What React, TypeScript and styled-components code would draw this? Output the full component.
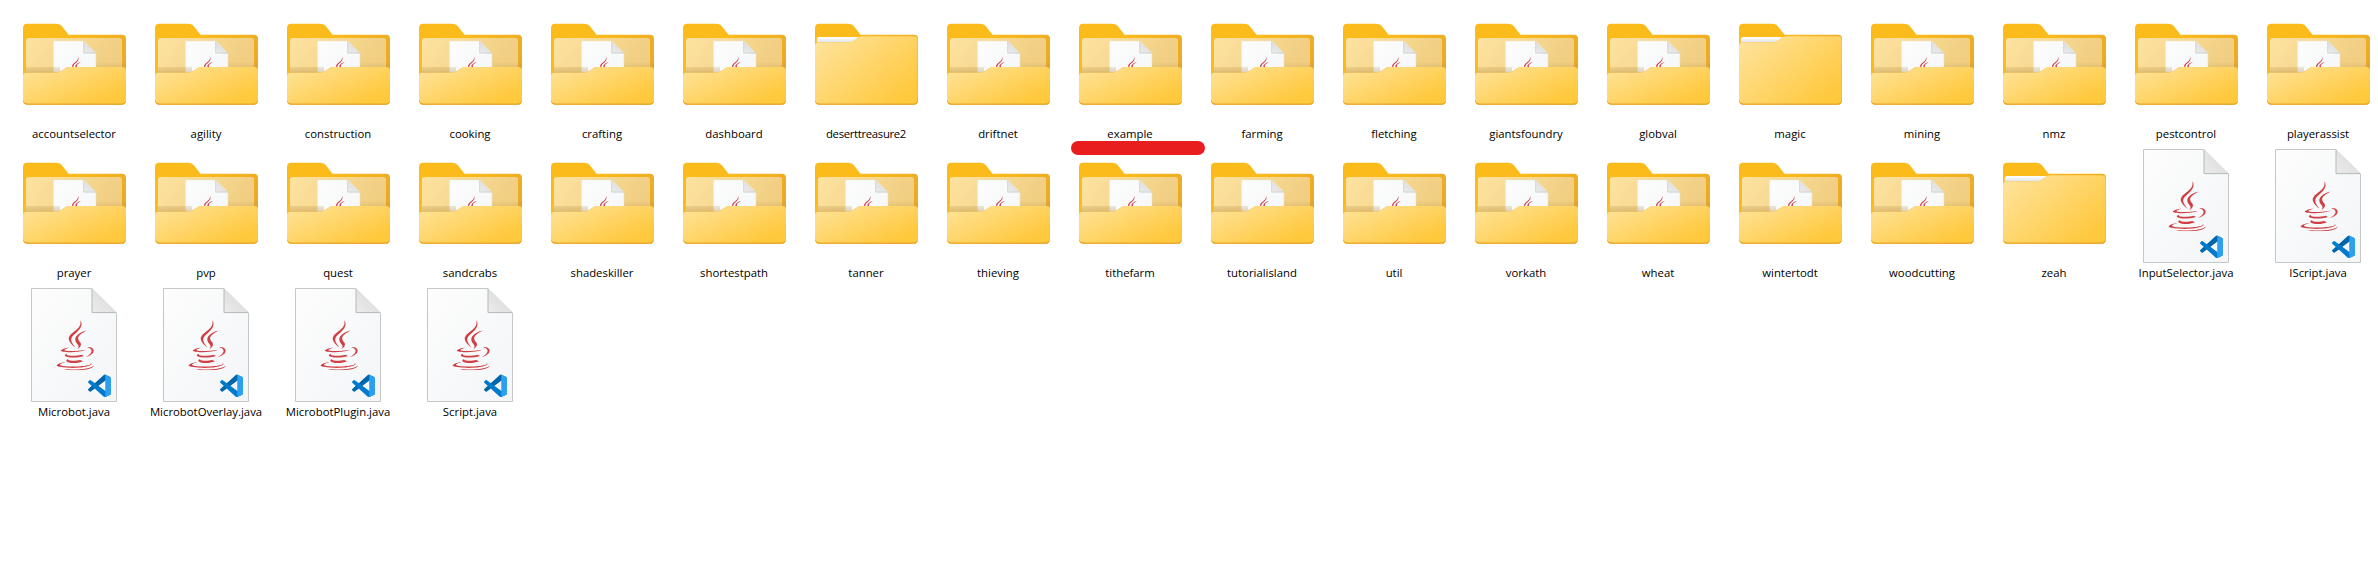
import React from "react";
import styled, { createGlobalStyle } from "styled-components";
import { FaJava } from "react-icons/fa";

type Kind = "folder" | "empty" | "java";

interface Entry {
  name: string;
  kind?: Kind;
  marked?: boolean;
  tracking?: number;
}

const entries: Entry[] = [
  { name: "accountselector" },
  { name: "agility" },
  { name: "construction" },
  { name: "cooking" },
  { name: "crafting" },
  { name: "dashboard" },
  { name: "deserttreasure2", kind: "empty", tracking: -0.33 },
  { name: "driftnet" },
  { name: "example", marked: true },
  { name: "farming" },
  { name: "fletching" },
  { name: "giantsfoundry" },
  { name: "globval" },
  { name: "magic", kind: "empty" },
  { name: "mining" },
  { name: "nmz" },
  { name: "pestcontrol" },
  { name: "playerassist" },
  { name: "prayer" },
  { name: "pvp" },
  { name: "quest" },
  { name: "sandcrabs" },
  { name: "shadeskiller" },
  { name: "shortestpath" },
  { name: "tanner" },
  { name: "thieving" },
  { name: "tithefarm" },
  { name: "tutorialisland" },
  { name: "util" },
  { name: "vorkath" },
  { name: "wheat" },
  { name: "wintertodt" },
  { name: "woodcutting" },
  { name: "zeah", kind: "empty" },
  { name: "InputSelector.java", kind: "java" },
  { name: "IScript.java", kind: "java" },
  { name: "Microbot.java", kind: "java" },
  { name: "MicrobotOverlay.java", kind: "java" },
  { name: "MicrobotPlugin.java", kind: "java" },
  { name: "Script.java", kind: "java" },
];

const GlobalStyle = createGlobalStyle`
  body {
    margin: 0;
    background: #fff;
    color: #000;
    font-family: "Open Sans", "Noto Sans", sans-serif;
  }
`;

const FileGrid = styled.main`
  display: grid;
  grid-template-columns: repeat(18, 120px);
  grid-auto-rows: 139px;
  column-gap: 12px;
  padding: 10px 0 0 14px;
`;

const Item = styled.div`
  position: relative;
  display: flex;
  flex-direction: column;
  align-items: center;
  gap: 2px;
`;

const Icon = styled.svg`
  flex: none;
  width: 114px;
  height: 114px;
`;

const Label = styled.span<{ $tracking: number }>`
  font-size: 11.35px;
  line-height: 16px;
  letter-spacing: ${(p) => p.$tracking}px;
  white-space: nowrap;
`;

const Marker = styled.div`
  position: absolute;
  top: 131px;
  left: 1px;
  width: 134px;
  height: 14px;
  border-radius: 7px;
  background: #e71d1e;
`;

const Gradients = styled.svg`
  position: absolute;
  width: 0;
  height: 0;
`;

const SharedGradients = () => (
  <Gradients aria-hidden="true">
    <defs>
      <linearGradient id="back" x1="0" y1="0" x2="1" y2="0.6">
        <stop offset="0.4" stopColor="#fbbb1b" />
        <stop offset="1" stopColor="#e8a828" />
      </linearGradient>
      <linearGradient id="pocket" x1="0" y1="0" x2="1" y2="0.3">
        <stop offset="0" stopColor="#fde3a0" />
        <stop offset="1" stopColor="#f0ce82" />
      </linearGradient>
      <linearGradient id="shade" x1="0" y1="0" x2="0" y2="1">
        <stop offset="0" stopColor="#a87f30" stopOpacity="0" />
        <stop offset="1" stopColor="#a87f30" stopOpacity="0.35" />
      </linearGradient>
      <linearGradient id="front" gradientUnits="userSpaceOnUse" x1="40" y1="49" x2="63" y2="101">
        <stop offset="0" stopColor="#ffe192" />
        <stop offset="1" stopColor="#ffc93d" />
      </linearGradient>
      <linearGradient id="frontTall" gradientUnits="userSpaceOnUse" x1="14" y1="26" x2="78" y2="102">
        <stop offset="0" stopColor="#ffe39c" />
        <stop offset="1" stopColor="#ffc93d" />
      </linearGradient>
      <linearGradient id="sheet" x1="0" y1="0" x2="0" y2="1">
        <stop offset="0" stopColor="#ffffff" />
        <stop offset="1" stopColor="#d9dbe0" />
      </linearGradient>
      <linearGradient id="paper" x1="0" y1="0" x2="1" y2="1">
        <stop offset="0" stopColor="#fdfdfd" />
        <stop offset="1" stopColor="#f3f5f7" />
      </linearGradient>
      <linearGradient id="fold" x1="0" y1="1" x2="0.6" y2="0.4">
        <stop offset="0" stopColor="#ececec" />
        <stop offset="1" stopColor="#dfdfdf" />
      </linearGradient>
    </defs>
  </Gradients>
);

const Page = ({ outline = "#c5c8c9" }: { outline?: string }) => (
  <>
    <path d="M.5 .5H60.8L85.5 25V113.5H.5Z" fill="url(#paper)" stroke={outline} />
    <path d="M61 .8V24.8H85.3Z" fill="url(#fold)" />
    <path d="M61 .8V24.6H85.3" fill="none" stroke="#b3bab6" />
    <FaJava x={19.3} y={32.3} size={50} color="#cf4045" />
  </>
);

const CodeBadge = () => (
  <g transform="translate(57 86.6) scale(.23 .225)">
    <path
      fill="#0065a9"
      d="M96.46 10.8 75.86.88a6.23 6.23 0 0 0-7.11 1.2L1.3 63.58a4.17 4.17 0 0 0 0 6.17l5.51 5a4.17 4.17 0 0 0 5.32.24l81.23-61.62c2.73-2.07 6.64-.12 6.64 3.3v-.24a6.25 6.25 0 0 0-3.54-5.63Z"
    />
    <path
      fill="#007acc"
      d="m96.46 89.2-20.6 9.92a6.23 6.23 0 0 1-7.11-1.2L1.3 36.42a4.17 4.17 0 0 1 0-6.17l5.51-5a4.17 4.17 0 0 1 5.32-.24l81.23 61.62c2.73 2.07 6.64.12 6.64-3.3v.24a6.25 6.25 0 0 1-3.54 5.63Z"
    />
    <path
      fill="#2c9fee"
      d="M75.86 99.13a6.23 6.23 0 0 1-7.11-1.21c2.31 2.3 6.25.67 6.25-2.59V4.67c0-3.26-3.94-4.9-6.25-2.59a6.23 6.23 0 0 1 7.11-1.21l20.6 9.91a6.25 6.25 0 0 1 3.54 5.63v67.18a6.25 6.25 0 0 1-3.54 5.63Z"
    />
  </g>
);

const JavaFileIcon = () => (
  <Icon viewBox="0 0 114 114">
    <g transform="translate(14 0)">
      <Page />
      <CodeBadge />
    </g>
  </Icon>
);

const FolderBack = () => (
  <path
    d="M6 18Q6 13.7 10.3 13.7H39Q43 13.7 45.5 17L51.6 24.7H105Q109 24.7 109 28.7V90Q109 94.7 104.5 94.7H10.5Q6 94.7 6 90Z"
    fill="url(#back)"
  />
);

const FolderIcon = () => (
  <Icon viewBox="0 0 114 114">
    <FolderBack />
    <path d="M9 30.5Q9 28 11.5 28H102.5Q105 28 105 30.5V66H9Z" fill="url(#pocket)" />
    <g transform="translate(36.2 30.8) scale(.5)">
      <Page outline="#e9e4d6" />
    </g>
    <path d="M9 57H43V63H9Z M79 51.5H109V58H79Z" fill="url(#shade)" />
    <path
      d="M6 66Q6 62.7 9.5 62.7H38Q42 62.7 45 60.5L48 58.4Q50 57 53 57H105.5Q109 57 109 60.5V90Q109 94.7 104.5 94.7H10.5Q6 94.7 6 90Z"
      fill="#eaa62a"
    />
    <path
      d="M6 66Q6 62.7 9.5 62.7H38Q42 62.7 45 60.5L48 58.4Q50 57 53 57H105.5Q109 57 109 60.5V89Q109 93.4 104.5 93.4H10.5Q6 93.4 6 89Z"
      fill="url(#front)"
    />
  </Icon>
);

const EmptyFolderIcon = () => (
  <Icon viewBox="0 0 114 114">
    <FolderBack />
    <path d="M7.8 29.5Q7.8 27 10.3 27H52V34H7.8Z" fill="url(#sheet)" />
    <path
      d="M6 36Q6 32.2 9.5 32.2H40Q43.5 32.2 45.8 30.2L48.4 28Q50.4 26.3 53 26.3H105Q109 26.3 109 30V90Q109 94.7 104.5 94.7H10.5Q6 94.7 6 90Z"
      fill="#eaa62a"
    />
    <path
      d="M6 36Q6 32.2 9.5 32.2H40Q43.5 32.2 45.8 30.2L48.4 28Q50.4 26.3 53 26.3H104.8Q108.6 26.3 108.6 30V89Q108.6 93.4 104.3 93.4H10.5Q6 93.4 6 89Z"
      fill="url(#frontTall)"
    />
  </Icon>
);

const icons: Record<Kind, React.FC> = {
  folder: FolderIcon,
  empty: EmptyFolderIcon,
  java: JavaFileIcon,
};

export default function App() {
  return (
    <>
      <GlobalStyle />
      <SharedGradients />
      <FileGrid>
        {entries.map(({ name, kind = "folder", marked, tracking = 0 }) => {
          const EntryIcon = icons[kind];
          return (
            <Item key={name}>
              <EntryIcon />
              <Label $tracking={tracking}>{name}</Label>
              {marked && <Marker />}
            </Item>
          );
        })}
      </FileGrid>
    </>
  );
}
